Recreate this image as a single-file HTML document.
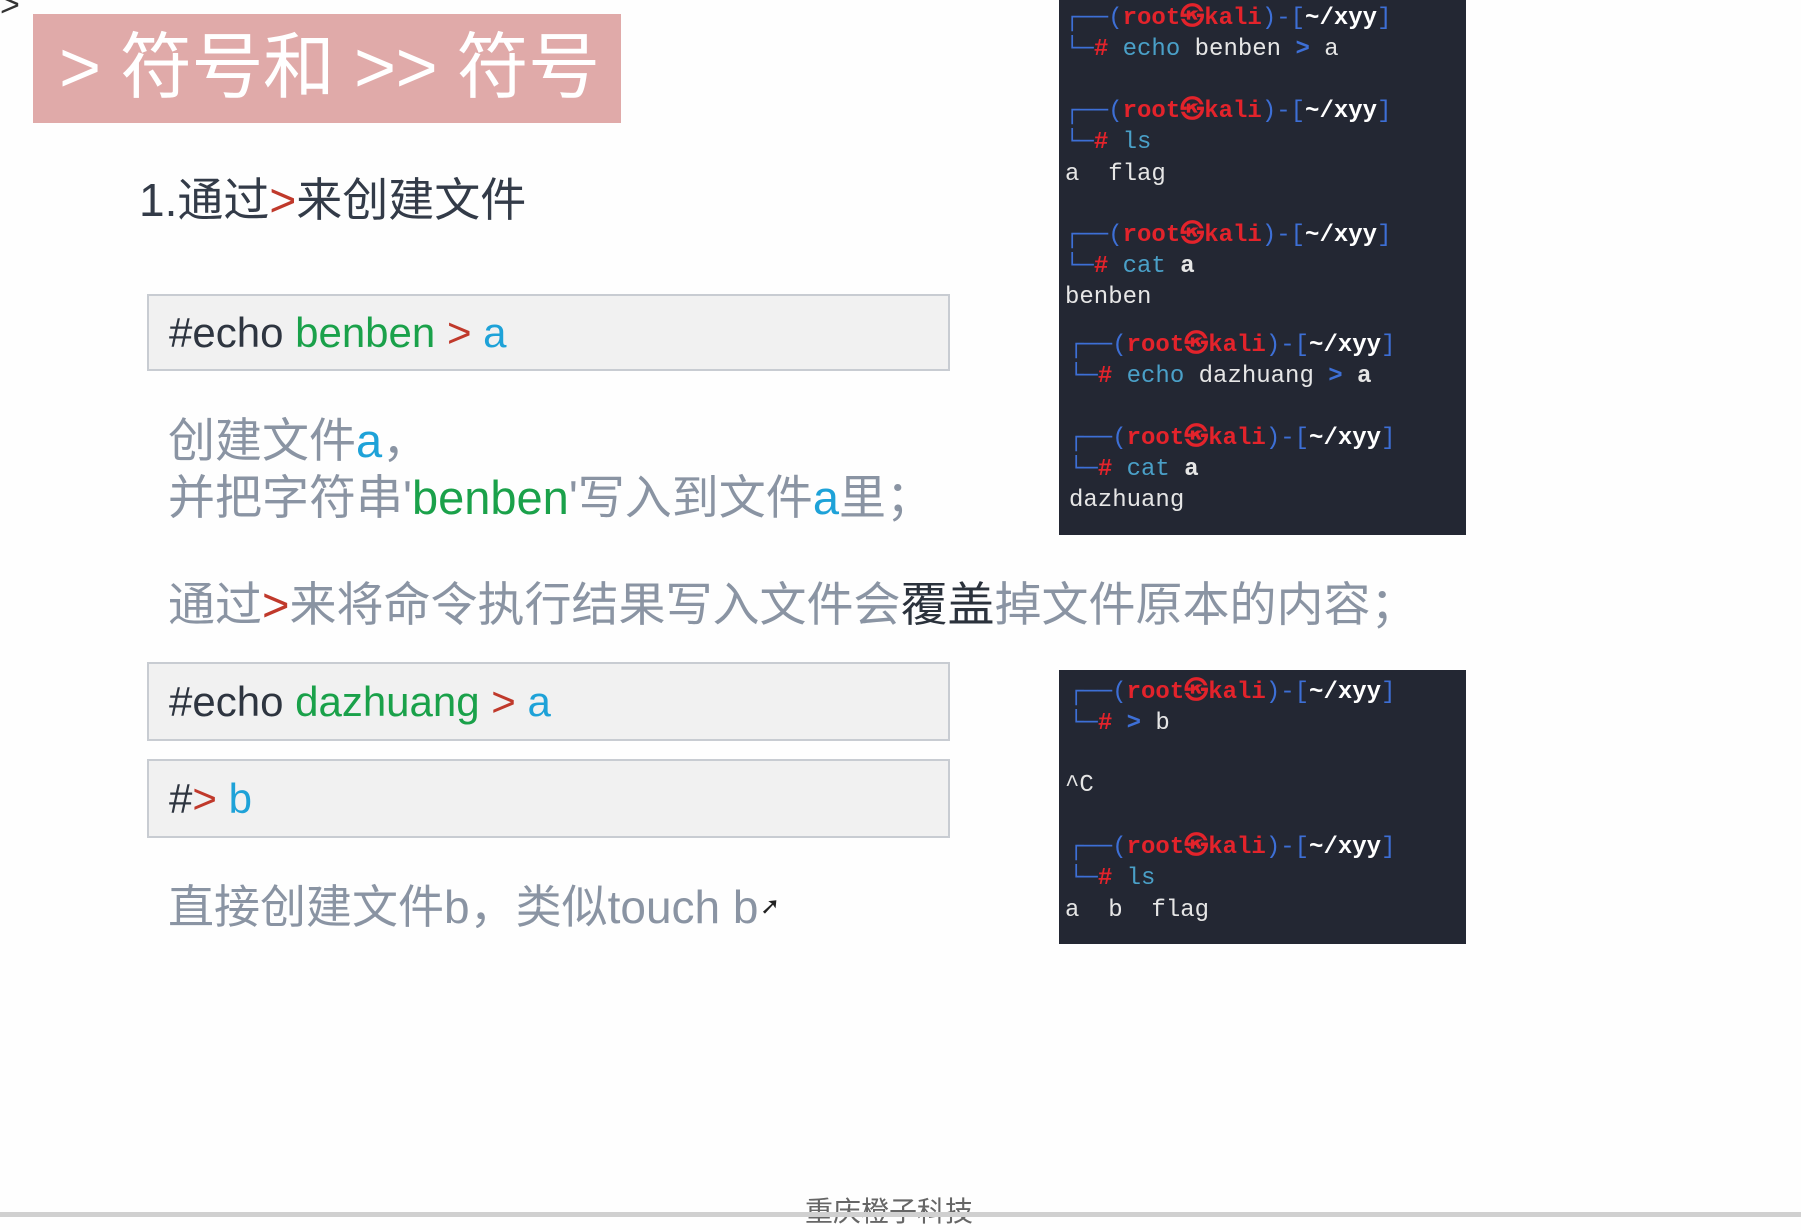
<!DOCTYPE html>
<html><head><meta charset="utf-8"><style>
body{margin:0;width:1801px;height:1217px;background:#fefefe;position:relative;overflow:hidden;font-family:"Liberation Sans","Noto Sans CJK SC",sans-serif}
.a{position:absolute;white-space:nowrap}
.title{left:33px;top:14px;width:588px;height:109px;background:#e0aaa9;color:#fff;font-size:72px;line-height:109px;padding-left:26px;box-sizing:border-box;letter-spacing:-0.5px;overflow:hidden}
.code{position:absolute;left:147px;width:803px;background:#f1f1f1;border:2px solid #c8ccd2;box-sizing:border-box;font-size:42px;color:#2e3540;padding-left:20px}
.g{color:#1aa14a}.r{color:#c0392b}.b{color:#1ea2d8}
.gray{color:#8a94a3;font-size:47px}
.term{position:absolute;left:1059px;width:407px;background:#232733;font-family:"Liberation Mono","DejaVu Sans Mono",monospace;font-size:24px;color:#e6e6e6}
.term div{position:absolute;left:6px;white-space:pre;line-height:30px}
.bl{color:#3d6fd6}.rd{color:#e3232b;font-weight:bold}.wb{color:#fff;font-weight:bold}.cy{color:#4aa0c8}
</style></head><body>
<div class="a" style="left:0;top:-14px;font-size:34px;color:#333">&gt;</div>
<div class="a title">&gt; 符号和 &gt;&gt; 符号</div>
<div class="a" style="left:139px;top:164px;font-size:46px;color:#333b48">1.通过<span class="r">&gt;</span>来创建文件</div>
<div class="code" style="top:294px;height:77px;line-height:73px">#echo <span class="g">benben</span> <span class="r">&gt;</span> <span class="b">a</span></div>
<div class="a gray" style="left:168px;top:402px">创建文件<span class="b">a</span>，</div>
<div class="a gray" style="left:168px;top:459px">并把字符串'<span class="g">benben</span>'写入到文件<span class="b">a</span>里；</div>
<div class="a gray" style="left:168px;top:566px">通过<span class="r">&gt;</span>来将命令执行结果写入文件会<span style="color:#2b323c">覆盖</span>掉文件原本的内容；</div>
<div class="code" style="top:662px;height:79px;line-height:75px">#echo <span class="g">dazhuang</span> <span class="r">&gt;</span> <span class="b">a</span></div>
<div class="code" style="top:759px;height:79px;line-height:75px">#<span class="r">&gt;</span> <span class="b">b</span></div>
<div class="a gray" style="left:168px;top:871px;font-size:46px">直接创建文件b，类似touch b</div>
<div class="a" style="left:760px;top:892px;font-size:24px;color:#222">➚</div>

<div class="term" style="top:0;height:535px">
<div style="top:4px"><span class="bl">┌──(</span><span class="rd">root㉿kali</span><span class="bl">)-[</span><span class="wb">~/xyy</span><span class="bl">]</span></div>
<div style="top:35px"><span class="bl">└─</span><span class="rd">#</span> <span class="cy">echo</span> benben <span class="bl" style="font-weight:bold">&gt;</span> a</div>
<div style="top:97px"><span class="bl">┌──(</span><span class="rd">root㉿kali</span><span class="bl">)-[</span><span class="wb">~/xyy</span><span class="bl">]</span></div>
<div style="top:128px"><span class="bl">└─</span><span class="rd">#</span> <span class="cy">ls</span></div>
<div style="top:160px">a  flag</div>
<div style="top:221px"><span class="bl">┌──(</span><span class="rd">root㉿kali</span><span class="bl">)-[</span><span class="wb">~/xyy</span><span class="bl">]</span></div>
<div style="top:252px"><span class="bl">└─</span><span class="rd">#</span> <span class="cy">cat</span> <b>a</b></div>
<div style="top:283px">benben</div>
<div style="top:331px;left:10px"><span class="bl">┌──(</span><span class="rd">root㉿kali</span><span class="bl">)-[</span><span class="wb">~/xyy</span><span class="bl">]</span></div>
<div style="top:362px;left:10px"><span class="bl">└─</span><span class="rd">#</span> <span class="cy">echo</span> dazhuang <span class="bl" style="font-weight:bold">&gt;</span> <b>a</b></div>
<div style="top:424px;left:10px"><span class="bl">┌──(</span><span class="rd">root㉿kali</span><span class="bl">)-[</span><span class="wb">~/xyy</span><span class="bl">]</span></div>
<div style="top:455px;left:10px"><span class="bl">└─</span><span class="rd">#</span> <span class="cy">cat</span> <b>a</b></div>
<div style="top:486px;left:10px">dazhuang</div>
</div>

<div class="term" style="top:670px;height:274px">
<div style="top:8px;left:10px"><span class="bl">┌──(</span><span class="rd">root㉿kali</span><span class="bl">)-[</span><span class="wb">~/xyy</span><span class="bl">]</span></div>
<div style="top:39px;left:10px"><span class="bl">└─</span><span class="rd">#</span> <span class="bl" style="font-weight:bold">&gt;</span> b</div>
<div style="top:101px">^C</div>
<div style="top:163px;left:10px"><span class="bl">┌──(</span><span class="rd">root㉿kali</span><span class="bl">)-[</span><span class="wb">~/xyy</span><span class="bl">]</span></div>
<div style="top:194px;left:10px"><span class="bl">└─</span><span class="rd">#</span> <span class="cy">ls</span></div>
<div style="top:226px">a  b  flag</div>
</div>

<div class="a" style="left:805px;top:1190px;font-size:28px;color:#666">重庆橙子科技</div>
<div class="a" style="left:0;top:1212px;width:1801px;height:5px;background:#d0d0d0"></div>
</body></html>
